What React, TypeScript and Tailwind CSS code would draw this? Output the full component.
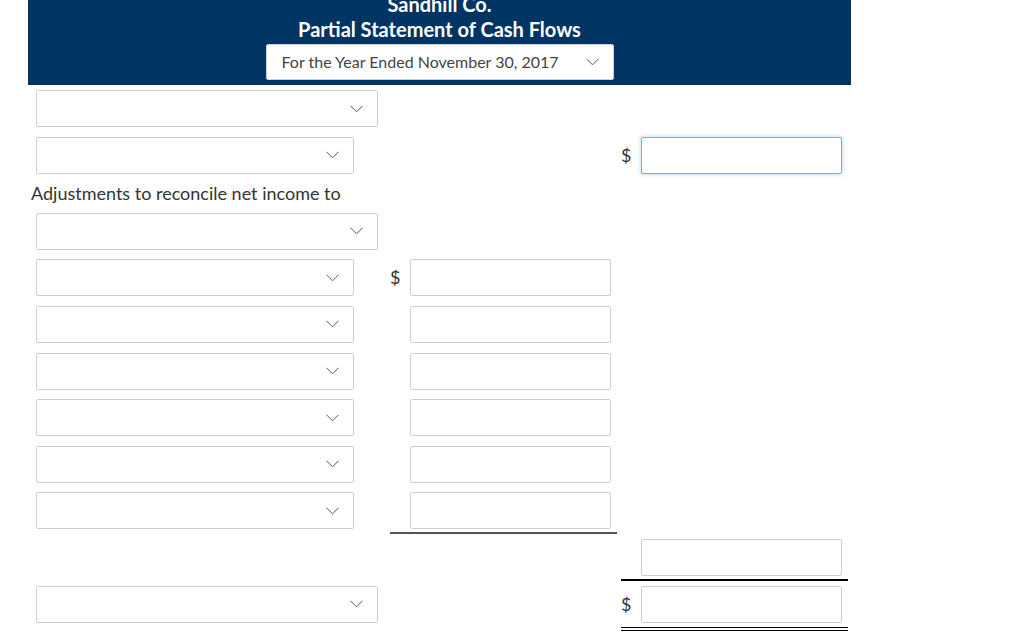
import React from 'react';

type Row = {
  kind: 'select' | 'label' | 'blank';
  wide?: boolean;
  mid?: boolean;
  midDollar?: boolean;
  midLine?: boolean;
  right?: boolean;
  rightDollar?: boolean;
  rightFocus?: boolean;
  rightLine?: 'single' | 'double';
  text?: string;
};

const rows: Row[] = [
  { kind: 'select', wide: true },
  { kind: 'select', right: true, rightDollar: true, rightFocus: true },
  { kind: 'label', text: 'Adjustments to reconcile net income to' },
  { kind: 'select', wide: true },
  { kind: 'select', mid: true, midDollar: true },
  { kind: 'select', mid: true },
  { kind: 'select', mid: true },
  { kind: 'select', mid: true },
  { kind: 'select', mid: true },
  { kind: 'select', mid: true, midLine: true },
  { kind: 'blank', right: true, rightLine: 'single' },
  { kind: 'select', wide: true, right: true, rightDollar: true, rightLine: 'double' },
];

function Chevron() {
  return (
    <svg width="13" height="8" viewBox="0 0 13 8" className="shrink-0">
      <polyline points="0.5,0.8 6.5,6.8 12.5,0.8" fill="none" stroke="#555" strokeWidth="1" />
    </svg>
  );
}

function SelectBox({ wide }: { wide?: boolean }) {
  return (
    <div
      className={`flex h-full items-center justify-end rounded-[2px] border border-[#cfcfcf] bg-white pr-[14px] ${
        wide ? 'w-[342px]' : 'w-[318px]'
      }`}
    >
      <Chevron />
    </div>
  );
}

function Dollar({ show }: { show?: boolean }) {
  return (
    <span className="flex w-[20px] shrink-0 items-center text-[18px] text-[#333]">{show ? '$' : ''}</span>
  );
}

function AmountInput({ focus }: { focus?: boolean }) {
  return (
    <div
      className={`h-full w-[201px] rounded-[2px] border bg-white ${
        focus ? 'border-[#66afe9] shadow-[0_0_5px_rgba(102,175,233,0.5)]' : 'border-[#cfcfcf]'
      }`}
    />
  );
}

export default function App() {
  return (
    <div className="min-h-[639px] bg-white font-['Lato','Open_Sans',sans-serif]">
      <div className="ml-[28px] flex h-[85px] w-[823px] flex-col items-center justify-end overflow-hidden bg-[#003462] pb-[5px]">
        <div className="shrink-0 text-[20px] font-bold leading-[25px] text-white">Sandhill Co.</div>
        <div className="shrink-0 text-[20px] font-bold leading-[25px] text-white">Partial Statement of Cash Flows</div>
        <div className="mt-[2px] flex h-[36px] w-[348px] shrink-0 items-center justify-between rounded-[2px] border border-[#cfcfcf] bg-white pl-[15px] pr-[14px]">
          <span className="text-[16px] text-[#444]">For the Year Ended November 30, 2017</span>
          <Chevron />
        </div>
      </div>

      <div className="mt-[5px] flex flex-col gap-[9.6px]">
        {rows.map((r, i) =>
          r.kind === 'label' ? (
            <div key={i} className="ml-[31px] text-[18px] leading-[20px] text-[#333]">
              {r.text}
            </div>
          ) : (
            <div key={i} className="ml-[36px] flex h-[37px]">
              <div className="h-full w-[354px]">{r.kind === 'select' && <SelectBox wide={r.wide} />}</div>
              <div
                className={`flex h-full w-[227px] ${
                  r.midLine ? '-mb-[5px] box-content border-b-2 border-[#555] pb-[3px]' : ''
                }`}
              >
                {r.mid && (
                  <>
                    <Dollar show={r.midDollar} />
                    <AmountInput />
                  </>
                )}
              </div>
              <div
                className={`ml-[4px] flex h-full w-[227px] ${
                  r.rightLine === 'single'
                    ? '-mb-[5px] box-content border-b-2 border-black pb-[3px]'
                    : r.rightLine === 'double'
                    ? '-mb-[8px] box-content border-b-[4px] border-double border-black pb-[4px]'
                    : ''
                }`}
              >
                {r.right && (
                  <>
                    <Dollar show={r.rightDollar} />
                    <AmountInput focus={r.rightFocus} />
                  </>
                )}
              </div>
            </div>
          )
        )}
      </div>
    </div>
  );
}
